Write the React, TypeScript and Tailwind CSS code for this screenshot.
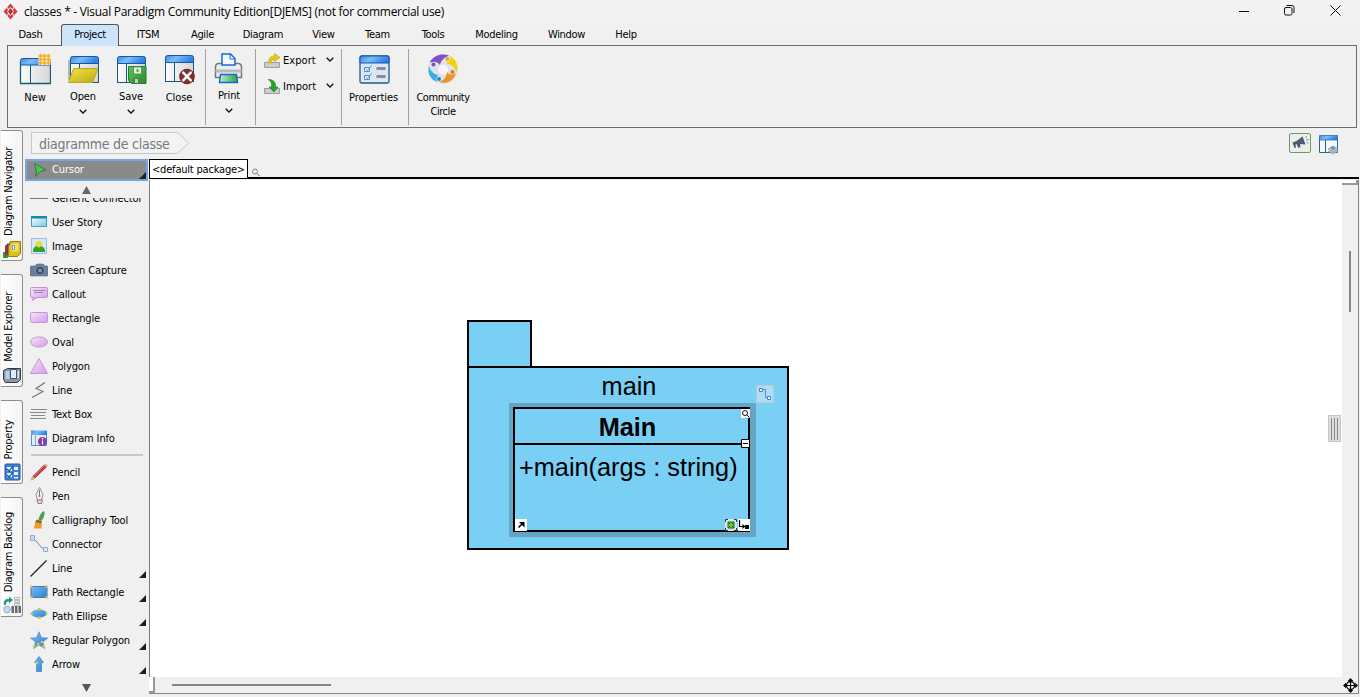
import React from "react";

type Kids = { children: React.ReactNode };

const Defs = () => (
  <svg className="absolute size-0" aria-hidden="true">
    <defs>
      <linearGradient id="bar" x1="0" x2="1" y2=".3"><stop offset="0" stopColor="#3f86dc" /><stop offset=".45" stopColor="#7cbdf8" /><stop offset="1" stopColor="#2f80e8" /></linearGradient>
      <linearGradient id="pane" x1="0" x2="1"><stop offset="0" stopColor="#fbfbfb" /><stop offset="1" stopColor="#d6d6d8" /></linearGradient>
      <linearGradient id="gold" x1="0" x2="1" y2="1"><stop offset="0" stopColor="#f2e640" /><stop offset="1" stopColor="#bda814" /></linearGradient>
      <linearGradient id="green" x1="0" x2="1" y2="1"><stop offset="0" stopColor="#5ec45e" /><stop offset="1" stopColor="#2c8a2c" /></linearGradient>
      <linearGradient id="mint" x1="0" x2="1"><stop offset="0" stopColor="#c4e8cc" /><stop offset="1" stopColor="#1fae38" /></linearGradient>
      <linearGradient id="pink" x1="0" x2="1" y2="1"><stop offset="0" stopColor="#f6e6fa" /><stop offset="1" stopColor="#d49ae6" /></linearGradient>
      <linearGradient id="blue" x1="0" x2="1" y2="1"><stop offset="0" stopColor="#7cbcf2" /><stop offset="1" stopColor="#2d7fd2" /></linearGradient>
      <linearGradient id="sky" x1="0" x2="1" y2="1"><stop offset="0" stopColor="#f2fbff" /><stop offset="1" stopColor="#7cc8ea" /></linearGradient>
    </defs>
  </svg>
);

const Big = ({ children }: Kids) => <svg width="32" height="32" viewBox="0 0 32 32" className="shrink-0">{children}</svg>;

const Win = ({ x = 1 }: { x?: number }) => (
  <g>
    <rect x={x + 0.5} y="9" width="28" height="19.5" fill="url(#pane)" stroke="#1c5876" />
    <path d={`M${x + 9.5} 9v19.5`} stroke="#1c5876" />
    <path d={`M${x + 0.5} 9.5V4.5q0-2 2-2h24q2 0 2 2v5z`} fill="url(#bar)" stroke="#1558a8" />
  </g>
);

const NewIcon = () => (
  <Big>
    <g transform="translate(0 2)"><path d="M1.500 7.500h30v21h-30z" fill="url(#pane)" stroke="#1c5876" strokeWidth="1.300" /><path d="M11.500 8v20" stroke="#1c5876" /><path d="M1.500 10V5.500q0-2 2-2h26q2 0 2 2V10z" fill="url(#bar)" stroke="#1558a8" /></g>
    <path d="M19.500 1h12v11h-12z" fill="#f8edb8" />
    <path d="M21.500 1v11M25.500 1v11M29.500 1v11M19.500 3h12M19.500 6.500h12M19.500 10h12" stroke="#eeb030" strokeWidth="1.600" />
  </Big>
);
const OpenIcon = () => (
  <Big>
    <path d="M1 6h3v20H1z" fill="#b5b5b5" />
    <g transform="translate(2 0)"><Win x={1} /></g>
    <path d="M6.500 14.500h24.500l-5.500 14H1.500z" fill="url(#gold)" stroke="#b8a81c" />
  </Big>
);
const SaveIcon = () => (
  <Big>
    <g transform="translate(1 0)"><Win x={1} /></g>
    <path d="M13.500 12.500h17.500v17h-14l-3.500-3z" fill="url(#green)" stroke="#267c2c" />
    <path d="M18.500 13h8v7h-8z" fill="#e8efe8" stroke="#48a048" />
    <path d="M18 24h9v5h-9z" fill="#438a48" /><path d="M20 25h3v4h-3z" fill="#b4d8b4" /><path d="M21.500 15h2v3h-2z" fill="#52a052" />
  </Big>
);
const CloseIcon = () => (
  <Big>
    <g transform="translate(1 0)"><Win x={1} /></g>
    <circle cx="24" cy="23.500" r="7.300" fill="#882c2e" stroke="#6a2628" />
    <path d="M20.200 19.700l7.600 7.600M27.800 19.700l-7.600 7.600" stroke="#fff" strokeWidth="2.500" strokeLinecap="round" />
  </Big>
);
const PrintIcon = () => (
  <Big>
    <path d="M5.500 10.500h20q2.500 0 3 3v11h-26v-11q.5-3 3-3z" fill="#ececec" stroke="#74777b" strokeWidth="1.500" />
    <path d="M2.500 16.500h26v3h-26z" fill="#b9babc" />
    <path d="M9 1h8.500L22 5.500V12H9z" fill="#f6faff" stroke="#1668d8" strokeWidth="1.500" /><path d="M17 1v5h5" fill="none" stroke="#1668d8" />
    <path d="M7.500 21.500h16l1 8h-18z" fill="url(#mint)" stroke="#1668d8" strokeWidth="1.500" />
  </Big>
);
const PropsIcon = () => (
  <Big>
    <rect x="2" y="3" width="29" height="27" rx="1.500" fill="#dce8f1" stroke="#1c5c88" strokeWidth="1.300" />
    <path d="M2 10V5q0-2 2-2h25q2 0 2 2v5z" fill="url(#bar)" stroke="#1558a8" />
    <path d="M6.500 14.500h5v4h-5zM6.500 22.500h5v4h-5z" fill="#fff" stroke="#4a8bd0" />
    <path d="M7.500 15.500l2 2 4-5M7.500 23.500l2 2 4-5" fill="none" stroke="#4a8bd0" />
    <path d="M18.500 14h9v3h-9zM18.500 22h9v3h-9z" fill="#858ba0" />
  </Big>
);
const CircleIcon = () => (
  <Big>
    <circle cx="16" cy="16" r="15" fill="#e2e2e6" />
    <path d="M2.500 9.500C7 2 15 0 22 2.500 18 4 14 7 13 12 10.500 8.500 7 8 2.500 9.500z" fill="#7b50c8" /><circle cx="6.500" cy="11.500" r="2" fill="#7b50c8" />
    <path d="M23 3c7 4 8.500 11 6.500 16-2-5-5-8-11-9 4-1 5.500-3 4.500-7z" fill="#f6d200" /><circle cx="20.500" cy="6" r="1.900" fill="#e2b020" />
    <path d="M29 20c-2.500 8-9 11.500-17 9 5-1.500 7.500-5 8-10 2.500 3 5.500 3.500 9 1z" fill="#ea9428" /><circle cx="25.500" cy="19" r="2" fill="#e07c14" />
    <path d="M2 13c1.500 5 4.500 8 9.500 9.500-2.500 1.500-2.500 4-1.500 6.500-7-3-10-9-8-16z" fill="#3ab0e4" /><circle cx="12" cy="26" r="2" fill="#2486cc" />
    <circle cx="16" cy="16.500" r="5" fill="#f5f5f5" />
  </Big>
);

const ExportIcon = () => (
  <svg width="18" height="16" viewBox="0 0 18 16"><path d="M.5 9.500h15v5H.500z" fill="#cdcdcd" stroke="#9c9c9c" /><path d="M4.500 10C4.500 5 7 3 10.500 3V.500l5.500 4-5.500 4V6.500C8 6.500 7.500 8 7.500 10z" fill="#e8c818" stroke="#c6a612" strokeWidth=".7" /></svg>
);
const ImportIcon = () => (
  <svg width="18" height="16" viewBox="0 0 18 16"><path d="M.5 9.500h15v5H.500z" fill="#cdcdcd" stroke="#9c9c9c" /><path d="M4 .500c6 0 8 3 7.500 7.500h2.500l-4 5-5-5h2.500C8 4 7 2 4 .500z" fill="#28a428" stroke="#1c8a20" strokeWidth=".7" /></svg>
);

const Chev = ({ className = "" }: { className?: string }) => (
  <svg width="8" height="5" viewBox="0 0 8 5" className={className}><path d="M.7.700L4 4 7.300.700" fill="none" stroke="#111" strokeWidth="1.300" /></svg>
);

const TABS: [string, string][] = [
  ["Dash", "w-[61px]"], ["Project", "w-[58px]"], ["ITSM", "w-[58px]"], ["Agile", "w-[51px]"], ["Diagram", "w-[70px]"], ["View", "w-[51px]"],
  ["Team", "w-[57px]"], ["Tools", "w-[54px]"], ["Modeling", "w-[73px]"], ["Window", "w-[67px]"], ["Help", "w-[52px]"],
];

function BigButton({ icon, label, drop, className }: { icon: React.ReactNode; label: string; drop?: boolean; className: string }) {
  return (
    <button className={`flex flex-col items-center text-center ${className}`}>
      {icon}
      <span className={`leading-[14px] ${drop ? "mt-1" : "mt-1.5"}`}>{label}</span>
      {drop && <Chev className="mt-[5px]" />}
    </button>
  );
}

const Sep = () => <div className="mt-[3px] h-[76px] w-px shrink-0 bg-[#a0a0a0]" />;

function SmallButton({ icon, label }: { icon: React.ReactNode; label: string }) {
  return (
    <button className="flex h-[26px] items-center">
      {icon}<span className="ml-px w-[43px] text-left tracking-[0.05px]">{label}</span><Chev className="-mt-1" />
    </button>
  );
}

const S = ({ children }: Kids) => <svg width="18" height="18" viewBox="0 0 18 18" className="shrink-0">{children}</svg>;

const TOOLS: { label: string; icon: React.ReactNode; more?: boolean }[] = [
  { label: "Generic Connector", icon: <S><path d="M0 9.500h18" stroke="#777" /></S> },
  { label: "User Story", icon: <S><path d="M1.500 4.500h15v9h-15z" fill="url(#sky)" stroke="#3fa0c6" /><path d="M1 3h16v2.500H1z" fill="#128ba4" /></S> },
  { label: "Image", icon: <S><rect x="1.500" y="1.500" width="15" height="15" fill="#d2e8fb" stroke="#9cbfe0" /><circle cx="9" cy="7.500" r="3.300" fill="#eedc28" /><path d="M3 15v-2c1-4 4-5 6-2 2-3 5-1 6 2v2z" fill="#389f28" /></S> },
  { label: "Screen Capture", icon: <S><path d="M1 5h4l2-2h6l2 2h2q1 0 1 1v8q0 1-1 1H1q-1 0-1-1V6q0-1 1-1z" fill="#64809e" stroke="#506b88" strokeWidth=".6" /><circle cx="10" cy="9.500" r="4.300" fill="#424850" stroke="#93a2b2" strokeWidth=".7" /><circle cx="10" cy="9.500" r="2" fill="#719bc9" /></S> },
  { label: "Callout", icon: <S><path d="M1.500 2.500h15q1 0 1 1v8q0 1-1 1H7l-5 3 2-3H1.500q-1 0-1-1v-8q0-1 1-1z" fill="url(#pink)" stroke="#c38fd2" /><path d="M3 5.500h12M4 7.500h9" stroke="#99849f" /></S> },
  { label: "Rectangle", icon: <S><rect x=".5" y="3.500" width="17" height="10" rx="1" fill="url(#pink)" stroke="#c993d8" /></S> },
  { label: "Oval", icon: <S><ellipse cx="9" cy="9" rx="8.500" ry="5" fill="url(#pink)" stroke="#c993d8" /></S> },
  { label: "Polygon", icon: <S><path d="M9 1.500l8.500 15H.500z" fill="url(#pink)" stroke="#c993d8" /></S> },
  { label: "Line", icon: <S><path d="M15 1.500L6 7.500l7 3-11 6" fill="none" stroke="#777" strokeWidth="1.200" /></S> },
  { label: "Text Box", icon: <S><path d="M1 4.500h16M0 7.500h16M1 10.500h14M0 13.500h16" stroke="#888" /></S> },
  { label: "Diagram Info", icon: <S><path d="M1.500 2.500h15v14h-15z" fill="#e6ebf0" stroke="#4a90ce" /><path d="M1 1.500h16V6H1z" fill="url(#bar)" /><path d="M5.500 6v10" stroke="#86adce" /><circle cx="12.500" cy="12.500" r="4.500" fill="#8638ae" /><path d="M12.500 9v1.500M12.500 11.500v4" stroke="#fff" strokeWidth="1.300" /></S> },
  { label: "Pencil", icon: <S><path d="M1 17l2-4L14 2l2.500 2L5 15z" fill="#c8383e" stroke="#822c32" strokeWidth=".5" /><path d="M4 13L14 3" stroke="#e77f82" /><path d="M14 2l1.500-1.500 2.500 2L16.500 4z" fill="#eea0a0" /><path d="M.5 17.500L2.500 13l2.500 2z" fill="#dfba83" /></S> },
  { label: "Pen", icon: <S><path d="M9.500.500l3.500 7-1.500 5.500h-4L6 7.500z" fill="#f4f4f4" stroke="#929292" /><path d="M9.500 3v5" stroke="#777" /><circle cx="9.500" cy="9" r="1" fill="#777" /><path d="M7 13h5.500l-1 3.500H8z" fill="#f0d8d8" stroke="#9b7777" /></S> },
  { label: "Calligraphy Tool", icon: <S><path d="M13.500 0c2 1 1 6-2 10l-3-1C9 5 11 2 13.500 0z" fill="#509a54" /><path d="M7 8.500l5 2-1 2.500-6-2z" fill="#886028" /><path d="M5 10.500l7 2.500q-1 3 0 4.500H3.500q1.500-2 1.500-7z" fill="#eb9b28" /></S> },
  { label: "Connector", icon: <S><path d="M2 3l3 2 9 10" fill="none" stroke="#7b828a" /><path d="M.5.500h4v5h-4z" fill="#c6dcf6" stroke="#91acd0" /><path d="M13.500 12.500h4v4h-4z" fill="#d6e8fb" stroke="#91acd0" /></S> },
  { label: "Line", more: true, icon: <S><path d="M.5 17.500L16.500 1.500" stroke="#222" strokeWidth="1.200" /></S> },
  { label: "Path Rectangle", more: true, icon: <S><path d="M1 3.500h16v11H1z" fill="url(#blue)" stroke="#327fc7" /><path d="M0 2.500h2.500v2.500H0zM15.500 2.500H18v2.500h-2.500zM0 13h2.500v2.500H0zM15.500 13H18v2.500h-2.500z" fill="#d4c849" /></S> },
  { label: "Path Ellipse", more: true, icon: <S><ellipse cx="9" cy="6.500" rx="8" ry="4" fill="url(#blue)" /><path d="M8 1h2.500v2.500H8zM8 9.500h2.500V12H8zM.5 5.500h2V8h-2zM15.500 5.500h2V8h-2z" fill="#d4c849" /></S> },
  { label: "Regular Polygon", more: true, icon: <S><path d="M9 .800l2.500 6 6.300.200-5 4 2 6.500L9 14l-5.500 3.500 2-6.500-5-4 6-.2z" fill="url(#blue)" stroke="#3a82cd" strokeWidth=".6" /><path d="M3 14h2.500v2.500H3zM7 12h2.500v2.500H7zM12.500 14H15v2.500h-2.500zM11 10h2v2h-2z" fill="#e0ce36" /></S> },
  { label: "Arrow", more: true, icon: <S><path d="M9 1.500l4.500 6h-2v9h-5v-9h-2z" fill="url(#blue)" stroke="#3f8ad4" strokeWidth=".8" /><circle cx="7" cy="8" r="1.300" fill="#e0ce36" /></S> },
];

function Tool({ t }: { t: (typeof TOOLS)[number] }) {
  return (
    <div className="relative flex h-6 shrink-0 items-center pl-[5px]">
      {t.icon}<span className="mt-0.5 ml-1 leading-6 whitespace-nowrap">{t.label}</span>
      {t.more && <svg width="7" height="7" viewBox="0 0 7 7" className="absolute right-[3px] bottom-0.5"><path d="M7 0v7H0z" fill="#1c1c24" /></svg>}
    </div>
  );
}

const SIDE: { label: string; box: string; icon: React.ReactNode }[] = [
  { label: "Diagram Navigator", box: "mt-[2px] h-[131px]", icon: <><path d="M0 12h5v6H0z" fill="#22a032" /><path d="M2 6l3-3v11l-3 2z" fill="#c82438" /><path d="M4 5l3-3h2v13H4z" fill="#2450a8" /><path d="M7.500 1.500h10v12l-3 3h-9v-10z" fill="#ddc01a" stroke="#94800e" /><path d="M8.500 3.500h7v8h-7z" fill="#f2df69" /><path d="M9.500 5.500h2v4h-2z" fill="#fff" stroke="#7b8db8" /></> },
  { label: "Model Explorer", box: "mt-[13px] h-[113px]", icon: <><path d="M.5 4.500l4-2h13v11l-3 3h-12l-2-3z" fill="#8d97a1" stroke="#333b44" /><path d="M2.500 5h4v8h-4z" fill="#b4d0ec" /><path d="M7.500 3.500h6v9h-6z" fill="#dfedf9" stroke="#40566e" /><path d="M14.500 5H16v7h-1.500z" fill="#dfe3e7" /></> },
  { label: "Property", box: "mt-[13px] h-[84px]", icon: <><rect x="2" y="1" width="15" height="16" rx="1" fill="#3e83da" stroke="#2255a0" /><path d="M4 4h5v4H4zM11 4h4v3h-4zM11 9h4v3h-4zM4 10h5v4H4zM11 14h4v1.500h-4z" fill="#e8f4ff" /><path d="M4 6l2 2 4-5M4 12l2 2 4-5" fill="none" stroke="#174e9c" strokeWidth="1.200" /></> },
  { label: "Diagram Backlog", box: "mt-[13px] h-[120px]", icon: <><path d="M1 9C0 4 3 2.500 6 3V.500l4 3.500-4 3.500V5.500C3.500 5 3 6.500 3 9z" fill="#24a078" /><circle cx="4" cy="13.500" r="3.300" fill="#c5dbf2" stroke="#8aacd0" /><path d="M8.500 10h2.500v7H8.500zM12 10h2.500v7H12zM15.500 10H18v7h-2.500z" fill="#66696d" /><path d="M11.500 1.500h5v2h-5zM11.500 4.500h5v2h-5zM11.500 7.500h5v2h-5z" fill="#eee" stroke="#bbb" /></> },
];

function SideTabs() {
  return (
    <div className="flex w-[25px] shrink-0 flex-col pl-px">
      {SIDE.map((s) => (
        <div key={s.label} className={`flex w-[22px] shrink-0 flex-col items-center justify-end rounded-r-[3px] border border-l-0 border-[#8e8e8e] bg-linear-to-r from-white to-[#f4f4f4] pb-0.5 ${s.box}`}>
          <span className="mb-1 -ml-1.5 rotate-180 text-[11px] leading-[14px] tracking-[-0.3px] whitespace-nowrap [writing-mode:vertical-rl]">{s.label}</span>
          <svg width="18" height="18" viewBox="0 0 18 18" className="ml-px shrink-0">{s.icon}</svg>
        </div>
      ))}
    </div>
  );
}

function Palette() {
  return (
    <div className="flex w-[124px] shrink-0 flex-col text-[11px] tracking-[-0.13px]">
      <div className="relative flex h-[22px] w-[123px] shrink-0 items-center border-2 border-[#70a8e4] bg-[#8a8a8a] pl-1 text-white">
        <S><path d="M3.500 2.500L15 9l-5.500 1.500L4.500 15.500l1-5z" fill="#4fc25c" stroke="#2f7a3c" /></S><span className="mt-px ml-[3px]">Cursor</span>
        <svg width="7" height="7" viewBox="0 0 7 7" className="absolute right-0 bottom-0"><path d="M7 0v7H0z" fill="#222" /></svg>
      </div>
      <svg width="9" height="8" viewBox="0 0 9 8" className="mt-[5px] ml-[57px] shrink-0"><path d="M4.500 0L9 8H0z" fill="#666" /></svg>
      <div className="mt-1 flex h-[480px] shrink-0 flex-col overflow-hidden">
        <div className="-mt-3 flex flex-col">
          {TOOLS.slice(0, 11).map((t) => <Tool key={t.label} t={t} />)}
          <div className="flex h-2.5 items-center pl-1.5"><div className="h-0.5 w-28 bg-[#c8c8c8]" /></div>
          {TOOLS.slice(11).map((t) => <Tool key={t.label} t={t} />)}
        </div>
      </div>
      <svg width="9" height="8" viewBox="0 0 9 8" className="mt-1.5 ml-[57px] shrink-0"><path d="M4.500 8L9 0H0z" fill="#555" /></svg>
    </div>
  );
}

function ClassDiagram() {
  return (
    <div className="relative min-w-0 flex-1 bg-white font-[Liberation_Sans,sans-serif] text-[25.3px] leading-[30px] text-black">
      <div className="absolute top-[140px] left-[317px] h-12 w-[65px] border-2 border-black bg-[#7acff5]" />
      <div className="absolute top-[186px] left-[317px] h-[184px] w-[322px] border-2 border-black bg-[#7acff5] pt-[3px] pl-0.5 text-center">main</div>
      <div className="absolute top-[223px] left-[359px] h-[134px] w-[247px] bg-[#63a5c3]" />
      <div className="absolute top-[227px] left-[363px] flex h-[125px] w-[237px] flex-col border-[2.5px] border-black bg-[#7acff5]">
        <div className="h-[36px] border-b-2 border-black pt-[3px] pr-2 text-center font-bold">Main</div>
        <div className="pt-[7px] pl-1 whitespace-nowrap">+main(args : string)</div>
      </div>
      <svg width="18" height="18" viewBox="0 0 18 18" className="absolute top-[205px] left-[606px]"><path d="M.5.500h17v17H.500z" fill="#abdff7" stroke="#bfc8cc" /><path d="M5 4.500h4.500v8H13" fill="none" stroke="#688b9b" /><path d="M3.500 3.500h3v3h-3zM11.500 11.500h3v3h-3z" fill="#fff" stroke="#4a7ae8" /></svg>
      <svg width="9" height="9" viewBox="0 0 9 9" className="absolute top-[229px] left-[591px]"><path d="M0 0h9v9H0z" fill="#fff" /><circle cx="4" cy="4" r="2.500" fill="none" stroke="#111" /><path d="M6 6l2.500 2.500" stroke="#111" /></svg>
      <svg width="9" height="9" viewBox="0 0 9 9" className="absolute top-[259px] left-[591px]"><path d="M.5.500h8v8h-8z" fill="#fff" stroke="#000" /><path d="M2 4.500h5" stroke="#000" /></svg>
      <svg width="12" height="12" viewBox="0 0 12 12" className="absolute top-[339px] left-[365px]"><path d="M0 0h12v12H0z" fill="#fff" /><path d="M3.500 8.500L7 5" stroke="#000" strokeWidth="1.600" /><path d="M4 3h5.500v5.500z" fill="#000" /></svg>
      <svg width="12" height="12" viewBox="0 0 12 12" className="absolute top-[339px] left-[575px]"><path d="M0 0h12v12H0z" fill="#dce4e4" /><path d="M.5 3V.500H3M9 .500h2.500V3M.5 9v2.500H3M9 11.500h2.500V9" fill="none" stroke="#333" /><path d="M3 3h6v6H3z" fill="#6cc93c" stroke="#1b6220" /><path d="M4 4h1v1H4zM7 4h1v1H7zM4 7h1v1H4zM7 7h1v1H7z" fill="#1b5a18" /></svg>
      <svg width="12" height="12" viewBox="0 0 12 12" className="absolute top-[339px] left-[588px]"><path d="M0 0h12v12H0z" fill="#fff" /><path d="M1.500 1v6.500H6" fill="none" stroke="#000" strokeWidth="1.200" /><path d="M4.500 5v5l3-2.500zM7 6h4v4H7z" fill="#000" /></svg>
      <div className="absolute top-[235px] right-px flex h-[27px] w-[13px] items-center justify-center gap-0.5 border border-[#c6c6c6] bg-[#dedede]">
        <i className="h-[22px] w-px bg-[#888]" /><i className="h-[22px] w-px bg-[#888]" /><i className="h-[22px] w-px bg-[#888]" />
      </div>
    </div>
  );
}

function Canvas() {
  return (
    <div className="flex min-w-0 flex-1 flex-col">
      <div className="flex h-[21px] shrink-0">
        <div className="h-5 w-[99px] shrink-0 border border-black bg-white text-center text-[11px] leading-[20px] tracking-[-0.2px] whitespace-nowrap">&lt;default package&gt;</div>
        <div className="mb-px flex-1 border-b-2 border-black pt-[9px] pl-1">
          <svg width="8" height="8" viewBox="0 0 8 8"><circle cx="3" cy="3.500" r="2.500" fill="none" stroke="#777" strokeWidth=".9" /><path d="M5 5.500L7.500 8" stroke="#666" /></svg>
        </div>
      </div>
      <div className="flex h-[497px] shrink-0">
        <div className="w-px bg-[#7c7c86]" />
        <ClassDiagram />
        <div className="flex w-4 flex-col items-center bg-[#f0f0f0]">
          <div className="h-[5px] w-full border-r-2 border-b-2 border-[#999] bg-white" />
          <div className="mt-[66px] h-[61px] w-0.5 bg-[#868686]" />
        </div>
        <div className="w-px bg-[#838890]" />
      </div>
      <div className="flex h-[17px] shrink-0 items-center border-r border-b border-[#838890] bg-[#f0f0f0]">
        <div className="h-full w-1.5 border-r-2 border-b-2 border-[#999] bg-white" />
        <div className="ml-[17px] h-0.5 w-[159px] bg-[#868686]" />
        <div className="flex-1" />
        <svg width="15" height="15" viewBox="0 0 15 15"><path d="M7.500 1v13M1 7.500h13" stroke="#000" strokeWidth="1.200" /><circle cx="7.500" cy="7.500" r="4" fill="none" stroke="#000" strokeWidth="1.300" /><path d="M7.500 0l2.800 3H4.700zM7.500 15l2.800-3H4.700zM0 7.500l3-2.800v5.600zM15 7.500l-3-2.800v5.600z" fill="#000" /></svg>
      </div>
    </div>
  );
}

export default function App() {
  return (
    <div className="relative flex h-[697px] w-[1360px] flex-col overflow-hidden bg-[#f0f0f0] font-['DejaVu_Sans_Condensed','DejaVu_Sans',sans-serif] text-[11px] text-black [font-stretch:condensed]">
      <Defs />
      <header className="flex h-[23px] shrink-0 items-center bg-[#f3f3f3] pl-[3px]">
        <svg width="15" height="17" viewBox="0 0 15 17"><path d="M7.500.500l7 8-7 8-7-8z" fill="#d33a42" /><path d="M4 4.500l7 8M11 4.500l-7 8" stroke="#f0c4c8" strokeWidth="1.200" /><path d="M7.500 4.500l3 4-3 4-3-4z" fill="#c02c36" stroke="#fff" strokeWidth=".9" /></svg>
        <h1 className="ml-1.5 font-['Open_Sans',sans-serif] text-[12px] tracking-[-0.29px] whitespace-nowrap [font-stretch:normal]">classes * - Visual Paradigm Community Edition[DJEMS] (not for commercial use)</h1>
        <div className="ml-auto flex items-center pr-[19px] pb-0.5">
          <svg width="11" height="11" viewBox="0 0 11 11"><path d="M0 6.500h10" stroke="#111" /></svg>
          <svg width="11" height="11" viewBox="0 0 11 11" className="ml-[34px]"><rect x=".5" y="2.500" width="7.500" height="7.500" rx="1.500" fill="none" stroke="#111" /><path d="M2.500.500H8Q10 .500 10 2.500V8" fill="none" stroke="#111" /></svg>
          <svg width="11" height="11" viewBox="0 0 11 11" className="ml-[35px]"><path d="M.5.500l10 10M10.500.500l-10 10" stroke="#111" /></svg>
        </div>
      </header>

      <nav className="flex h-[22px] shrink-0 items-stretch tracking-[-0.3px]">
        {TABS.map(([name, w]) => (
          <div key={name} className={`flex shrink-0 items-center justify-center ${w} ${name === "Project" ? "relative -mb-px mt-px rounded-t-[3px] border border-b-0 border-[#555] bg-[#cce4fc]" : "pt-[3px]"}`}>{name}</div>
        ))}
      </nav>

      <section className="mr-[3px] ml-[7px] flex h-[83px] shrink-0 border border-[#6c6c6c] tracking-[-0.1px]">
        <BigButton className="ml-[11px] w-8 pt-[7px]" icon={<NewIcon />} label="New" />
        <BigButton className="ml-4 w-8 pt-2" icon={<OpenIcon />} label="Open" drop />
        <BigButton className="ml-4 w-8 pt-2" icon={<SaveIcon />} label="Save" drop />
        <BigButton className="ml-4 mr-[10px] w-8 pt-[7px]" icon={<CloseIcon />} label="Close" />
        <Sep />
        <BigButton className="mr-[10px] ml-[7px] w-8 pt-[7px]" icon={<PrintIcon />} label="Print" drop />
        <Sep />
        <div className="flex w-[85px] flex-col pt-0.5 pl-2">
          <SmallButton icon={<ExportIcon />} label="Export" />
          <SmallButton icon={<ImportIcon />} label="Import" />
        </div>
        <Sep />
        <BigButton className="w-[66px] pt-[7px] pr-[3px]" icon={<PropsIcon />} label="Properties" />
        <Sep />
        <BigButton className="w-[68px] pt-[7px] tracking-[-0.45px]" icon={<CircleIcon />} label="Community Circle" />
      </section>

      <div className="flex min-h-0 flex-1">
        <SideTabs />
        <div className="flex min-w-0 flex-1 flex-col">
          <div className="flex h-[31px] shrink-0 items-start pr-[21px] pl-1.5">
            <div className="relative mt-1 h-[23px] w-[159px]">
              <svg width="159" height="23" viewBox="0 0 159 23" className="absolute inset-0"><path d="M.5.500h146l11 10.500-11 10.500H.500z" fill="#f3f3f3" stroke="#c4c8ca" /></svg>
              <span className="relative block pl-2 text-[14px] leading-[24px] tracking-[-0.24px] whitespace-nowrap text-[#747a7e]">diagramme de classe</span>
            </div>
            <svg width="22" height="21" viewBox="0 0 22 21" className="mt-[5px] ml-auto"><rect x=".5" y=".5" width="21" height="19" rx="1.500" fill="#ededed" stroke="#6c9c62" /><path d="M3.500 9.500l4-1.500 6-4.500 3 8-5.500-.5.5 3-2 1-2-4-1 .5.5 3-1.500.5z" fill="#4a5b72" /><path d="M16 5l2-2M17 7l3-.5M17.500 9.500l2 1" stroke="#8997a8" /></svg>
            <svg width="21" height="21" viewBox="0 0 21 21" className="mt-1.5 ml-[7px]"><path d="M1.500 4.500h18v14h-18z" fill="#f6f6f6" stroke="#24668a" /><path d="M1.500 1.500h18V6h-18z" fill="url(#bar)" stroke="#2060b0" strokeWidth=".7" /><path d="M7.500 6v12" stroke="#24668a" /><path d="M10 15l5-3 5 3-5 3zM10 17l5 3 5-3" fill="#b4bac1" stroke="#8c959d" strokeWidth=".7" /><circle cx="15" cy="14" r="1.700" fill="#5c94d5" /></svg>
          </div>
          <div className="flex min-h-0 flex-1 pr-px">
            <Palette />
            <Canvas />
          </div>
        </div>
      </div>
    </div>
  );
}
